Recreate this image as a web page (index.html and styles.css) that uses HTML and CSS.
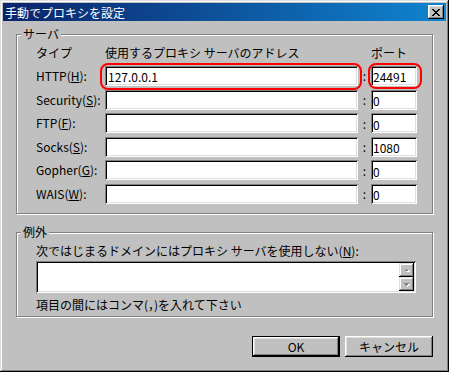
FILE: index.html
```html
<!DOCTYPE html>
<html lang="ja">
<head>
  <meta charset="UTF-8" />
  <title>手動でプロキシを設定</title>
  <link rel="stylesheet" href="styles.css">
</head>
<body>

  <div class="window">
    <div class="titlebar">
      <span>手動でプロキシを設定</span>
      <span class="close">
        <svg width="8" height="7" viewBox="0 0 8 7" shape-rendering="crispEdges"><path d="M0 0h2v1H0zM6 0h2v1H6zM1 1h2v1H1zM5 1h2v1H5zM2 2h4v1H2zM3 3h2v1H3zM2 4h4v1H2zM1 5h2v1H1zM5 5h2v1H5zM0 6h2v1H0zM6 6h2v1H6z" fill="#000"/></svg>
      </span>
    </div>

    <div class="content">
      <div class="group servers">
        <span class="caption">サーバ</span>
        <div class="grid">
          <span class="hd">タイプ</span>
          <span class="hd">使用するプロキシ サーバのアドレス</span>
          <span></span>
          <span class="hd">ポート</span>

          <label>HTTP(<u>H</u>):</label>
          <div class="edit mark">127.0.0.1</div>
          <span class="colon">:</span>
          <div class="edit port mark">24491</div>

          <label>Security(<u>S</u>):</label>
          <div class="edit"></div>
          <span class="colon">:</span>
          <div class="edit port">0</div>

          <label>FTP(<u>F</u>):</label>
          <div class="edit"></div>
          <span class="colon">:</span>
          <div class="edit port">0</div>

          <label>Socks(<u>S</u>):</label>
          <div class="edit"></div>
          <span class="colon">:</span>
          <div class="edit port">1080</div>

          <label>Gopher(<u>G</u>):</label>
          <div class="edit"></div>
          <span class="colon">:</span>
          <div class="edit port">0</div>

          <label>WAIS(<u>W</u>):</label>
          <div class="edit"></div>
          <span class="colon">:</span>
          <div class="edit port">0</div>
        </div>
      </div>

      <div class="group exceptions">
        <span class="caption">例外</span>
        <div class="line">次ではじまるドメインにはプロキシ サーバを使用しない(<u>N</u>):</div>
        <div class="memo">
          <div class="memo-text"></div>
          <div class="scroll">
            <span class="sb"><svg width="7" height="5" viewBox="0 0 7 5"><path d="M3 1h1v1h1v1H2V2h1z" fill="#808080"/><path d="M5 2h1v1h1v1H3V3h2z" fill="#fff"/></svg></span>
            <span class="sb"><svg width="7" height="5" viewBox="0 0 7 5"><path d="M1 2h5v1h-1v1h-1v1h-1v-1h-1v-1h-1z" fill="#fff" transform="translate(1 0)"/><path d="M1 1h5v1h-1v1h-1v1h-1v-1h-1v-1h-1z" fill="#808080"/></svg></span>
          </div>
        </div>
        <div class="line hint">項目の間にはコンマ(，)を入れて下さい</div>
      </div>

      <div class="buttons">
        <button class="btn default">OK</button>
        <button class="btn">キャンセル</button>
      </div>
    </div>
  </div>

</body>
</html>
```

FILE: styles.css
```css
body {
  margin: 0;
  background: #fff;
  font-family: "Noto Sans CJK JP", sans-serif;
  font-size: 12px;
  color: #000;
}
.window {
  width: 449px;
  height: 372px;
  box-sizing: border-box;
  padding: 3px;
  background: #c0c0c0;
  box-shadow: inset -1px -1px #000, inset 1px 1px #dfdfdf, inset -2px -2px #808080, inset 2px 2px #fff;
}
.titlebar {
  height: 18px;
  display: flex;
  align-items: center;
  justify-content: space-between;
  padding-left: 2px;
  color: #fff;
  background: linear-gradient(90deg, #0a246a, #1084d0);
}
.close {
  width: 16px;
  height: 14px;
  margin-right: 2px;
  display: flex;
  align-items: center;
  justify-content: center;
  background: #c0c0c0;
  box-shadow: inset -1px -1px #000, inset 1px 1px #fff, inset -2px -2px #808080, inset 2px 2px #dfdfdf;
}
.content {
  padding: 13px 13px 0;
}
.group {
  position: relative;
  box-sizing: border-box;
  border: 1px solid #808080;
  box-shadow: inset 1px 1px #fff, 1px 1px #fff;
}
.caption {
  position: absolute;
  top: -8px;
  left: 4px;
  padding: 0 2px;
  line-height: 14px;
  background: #c0c0c0;
}
.servers {
  height: 180px;
  padding: 9px 0 0 19px;
}
.grid {
  display: grid;
  grid-template-columns: 69px 253px 13px 46px;
  grid-template-rows: 18.4px repeat(6, 20px);
  row-gap: 3.6px;
  align-items: center;
}
.hd, label {
  line-height: 14px;
}
.edit {
  position: relative;
  height: 20px;
  box-sizing: border-box;
  padding: 2px 3px 0;
  display: flex;
  align-items: center;
  background: #fff;
  box-shadow: inset 1px 1px #808080, inset -1px -1px #fff, inset 2px 2px #000, inset -2px -2px #dfdfdf;
}
.edit.port {
  padding-left: 2px;
}
.mark::after {
  content: '';
  position: absolute;
  left: -5px;
  right: -4px;
  top: -3px;
  bottom: -4px;
  border: 2px solid #f00;
  border-radius: 8px;
}
.port.mark::after {
  left: -3px;
  right: -5px;
  bottom: -3px;
}
.colon {
  text-align: center;
}
.exceptions {
  margin-top: 18px;
  height: 85px;
  padding: 11px 0 0 19px;
}
.line {
  line-height: 14px;
}
.memo {
  margin-top: 3px;
  width: 380px;
  height: 32px;
  box-sizing: border-box;
  padding: 2px;
  display: flex;
  background: #fff;
  box-shadow: inset 1px 1px #808080, inset -1px -1px #fff, inset 2px 2px #000, inset -2px -2px #dfdfdf;
}
.memo-text {
  flex: 1;
}
.scroll {
  display: flex;
  flex-direction: column;
}
.sb {
  width: 15px;
  height: 14px;
  display: flex;
  align-items: center;
  justify-content: center;
  background: #c0c0c0;
  box-shadow: inset -1px -1px #000, inset 1px 1px #dfdfdf, inset -2px -2px #808080, inset 2px 2px #fff;
}
.hint {
  margin-top: 5px;
}
.buttons {
  display: flex;
  justify-content: flex-end;
  gap: 5px;
  margin-top: 19px;
}
.btn {
  width: 88px;
  height: 21px;
  padding: 0;
  border: 0;
  font: inherit;
  color: #000;
  background: #c0c0c0;
  box-shadow: inset -1px -1px #000, inset 1px 1px #fff, inset -2px -2px #808080, inset 2px 2px #dfdfdf;
}
.btn.default {
  border: 1px solid #000;
}
```
